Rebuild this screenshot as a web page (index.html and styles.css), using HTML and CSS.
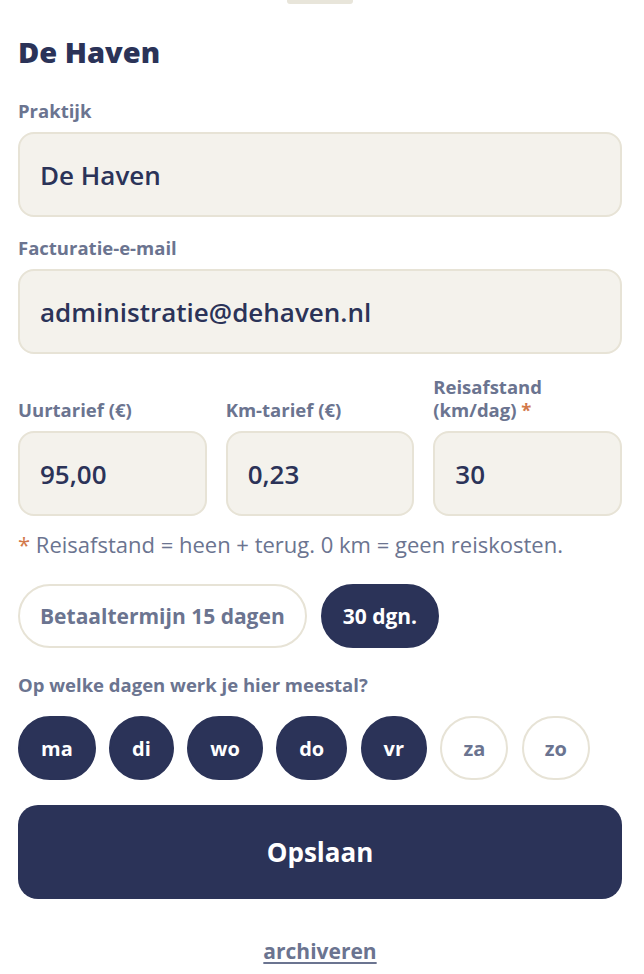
FILE: index.html
```html
<!DOCTYPE html>
<html lang="nl">
<head>
<meta charset="utf-8">
<title>De Haven</title>
<link rel="stylesheet" href="styles.css">
</head>
<body>
<div class="sheet">
  <div class="handle"></div>
  <h1 class="title">De Haven</h1>

  <div class="field">
    <label class="label">Praktijk</label>
    <div class="input">De Haven</div>
  </div>

  <div class="field">
    <label class="label">Facturatie-e-mail</label>
    <div class="input">administratie@dehaven.nl</div>
  </div>

  <div class="row">
    <div class="col">
      <label class="label">Uurtarief (€)</label>
      <div class="input">95,00</div>
    </div>
    <div class="col">
      <label class="label">Km-tarief (€)</label>
      <div class="input">0,23</div>
    </div>
    <div class="col">
      <label class="label">Reisafstand<br>(km/dag) <span class="star">*</span></label>
      <div class="input">30</div>
    </div>
  </div>

  <p class="note"><span class="star">*</span> Reisafstand = heen + terug. 0 km = geen reiskosten.</p>

  <div class="pills">
    <span class="pill">Betaaltermijn 15 dagen</span>
    <span class="pill on">30 dgn.</span>
  </div>

  <div class="label days-label">Op welke dagen werk je hier meestal?</div>
  <div class="days">
    <span class="day on">ma</span>
    <span class="day on">di</span>
    <span class="day on">wo</span>
    <span class="day on">do</span>
    <span class="day on">vr</span>
    <span class="day">za</span>
    <span class="day">zo</span>
  </div>

  <button class="save">Opslaan</button>
  <div class="archive"><a href="#">archiveren</a></div>
</div>
</body>
</html>
```

FILE: styles.css
```css
* { box-sizing: border-box; }
html, body { margin: 0; padding: 0; background: #ffffff; }
body {
  font-family: "Open Sans", "Noto Sans", sans-serif;
  color: #2b3358;
}
.sheet {
  width: 644px;
  padding: 0 22px 0 18px;
}
.handle {
  width: 66px;
  height: 4px;
  margin: 0 auto;
  background: #e8e5da;
  border-radius: 0 0 3px 3px;
}
.title {
  margin: 30px 0 0;
  font-size: 29px;
  line-height: 36px;
  font-weight: 800;
  color: #2b3358;
}
.label {
  display: block;
  font-size: 18.5px;
  line-height: 22px;
  font-weight: 700;
  color: #6b7490;
  margin-bottom: 10px;
}
.field { margin-top: 30px; }
.field + .field { margin-top: 20px; }
.input {
  height: 85px;
  display: flex;
  align-items: center;
  padding: 0 20px;
  background: #f4f2ec;
  border: 2px solid #e7e3d6;
  border-radius: 16px;
  font-size: 26px;
  font-weight: 600;
  color: #2b3358;
}
.row {
  margin-top: 21px;
  display: grid;
  grid-template-columns: 1fr 1fr 1fr;
  column-gap: 19px;
}
.col {
  display: flex;
  flex-direction: column;
  justify-content: flex-end;
}
.col .label { line-height: 23px; }
.star { color: #d2784a; }
.note {
  margin: 14px 0 0;
  font-size: 22px;
  line-height: 28px;
  color: #6b7490;
}
.pills {
  margin-top: 26px;
  display: flex;
  gap: 14px;
}
.pill {
  height: 64px;
  display: inline-flex;
  align-items: center;
  padding: 0 20px;
  border: 2px solid #e7e3d6;
  border-radius: 32px;
  font-size: 21px;
  font-weight: 700;
  color: #6b7490;
  background: #ffffff;
}
.pill.on {
  background: #2b3358;
  border-color: #2b3358;
  color: #ffffff;
}
.days-label { margin-top: 26px; margin-bottom: 20px; }
.days {
  display: flex;
  gap: 13.4px;
}
.day {
  min-width: 64px;
  height: 64px;
  padding: 0 21px;
  display: inline-flex;
  align-items: center;
  justify-content: center;
  border: 2px solid #e7e3d6;
  border-radius: 32px;
  font-size: 20px;
  font-weight: 700;
  color: #6b7490;
}
.day.on {
  background: #2b3358;
  border-color: #2b3358;
  color: #ffffff;
}
.save {
  display: block;
  width: 100%;
  height: 94px;
  margin-top: 25px;
  border: none;
  border-radius: 20px;
  background: #2b3358;
  color: #ffffff;
  font-family: inherit;
  font-size: 26px;
  font-weight: 700;
}
.archive {
  text-align: center;
  margin-top: 38px;
}
.archive a {
  font-size: 21px;
  line-height: 28px;
  font-weight: 700;
  color: #6b7490;
  text-decoration: underline;
  text-underline-offset: 3px;
}
```
